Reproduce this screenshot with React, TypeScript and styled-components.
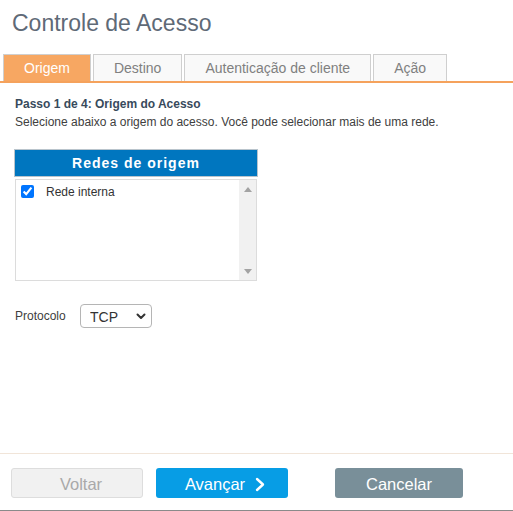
import React from "react";
import styled, { createGlobalStyle } from "styled-components";

const Global = createGlobalStyle`
  html, body { margin: 0; padding: 0; background: #fff; }
  body { font-family: "Liberation Sans", Arial, sans-serif; }
  * { box-sizing: border-box; }
`;

const Page = styled.div`
  height: 511px;
  display: flex;
  flex-direction: column;
  border-bottom: 1px solid #8a8a8a;
`;

const Main = styled.div`
  flex: 1;
  display: flex;
  flex-direction: column;
`;

const Title = styled.h1`
  margin: 0;
  padding: 10px 0 0 12px;
  font-size: 23px;
  line-height: 26px;
  font-weight: normal;
  color: #5f6a77;
`;

const TabBar = styled.div`
  margin-top: 18px;
  display: flex;
  gap: 2px;
  padding-left: 3px;
  border-bottom: 2px solid #f5a25c;
`;

const Tab = styled.div<{ $active?: boolean }>`
  padding: 1px 20px 0;
  line-height: 25px;
  font-size: 14px;
  border: 1px solid #cfcfcf;
  border-bottom: none;
  height: 27px;
  background: ${(p) => (p.$active ? "#f7a762" : "#f9f9f9")};
  color: ${(p) => (p.$active ? "#ffffff" : "#808080")};
`;

const Content = styled.div`
  padding: 12px 15px 0 15px;
  display: flex;
  flex-direction: column;
`;

const StepTitle = styled.div`
  font-size: 12px;
  line-height: 18px;
  font-weight: bold;
  color: #384a5c;
`;

const StepText = styled.div`
  font-size: 12px;
  line-height: 18px;
  color: #404040;
`;

const Panel = styled.div`
  margin-top: 18px;
  margin-left: -1px;
  width: 244px;
  display: flex;
  flex-direction: column;
  gap: 2px;
`;

const PanelHeader = styled.div`
  height: 28px;
  background: #0076bf;
  border: 1px solid #b9c4cc;
  color: #fff;
  font-weight: bold;
  font-size: 14px;
  letter-spacing: 1px;
  text-align: center;
  line-height: 26px;
`;

const ListBox = styled.div`
  margin: 0 1px;
  height: 102px;
  border: 1px solid #dcdcdc;
  display: flex;
`;

const ListItems = styled.div`
  flex: 1;
  padding: 5px;
`;

const ListRow = styled.label`
  display: flex;
  align-items: center;
  font-size: 12px;
  color: #333;
  height: 13px;
`;

const Check = styled.input`
  margin: 0 12px 0 0;
  width: 13px;
  height: 13px;
  accent-color: #0075ff;
`;

const ScrollTrack = styled.div`
  width: 17px;
  background: #f1f1f1;
  display: flex;
  flex-direction: column;
  justify-content: space-between;
  align-items: center;
  padding: 7px 0 6px;
`;

const ProtoRow = styled.div`
  margin-top: 23px;
  display: flex;
  align-items: center;
`;

const ProtoLabel = styled.span`
  font-size: 12px;
  color: #404040;
  width: 65px;
`;

const SelectWrap = styled.div`
  position: relative;
  width: 72px;
  height: 24px;
`;

const Select = styled.select`
  appearance: none;
  width: 100%;
  height: 100%;
  border: 1px solid #b5b5b5;
  border-radius: 4px;
  background: #fff;
  font-family: "Liberation Sans", Arial, sans-serif;
  font-size: 14px;
  color: #333;
  padding: 1px 0 0 9px;
`;

const SelectArrow = styled.span`
  position: absolute;
  right: 6px;
  top: 9px;
  pointer-events: none;
  display: flex;
`;

const Footer = styled.div`
  border-top: 1px solid #f1e5d9;
  padding: 14px 11px 12px;
  display: flex;
  gap: 13px;
`;

const Button = styled.button<{ $variant: "disabled" | "primary" | "secondary"; $width: number }>`
  width: ${(p) => p.$width}px;
  height: 30px;
  border-radius: 3px;
  font-family: "Liberation Sans", Arial, sans-serif;
  font-size: 16.5px;
  display: flex;
  align-items: center;
  justify-content: center;
  gap: 10px;
  padding: 2px 0 0 ${(p) => (p.$variant === "disabled" ? "8px" : "0")};
  border: 1px solid
    ${(p) => (p.$variant === "disabled" ? "#dddddd" : "transparent")};
  background: ${(p) =>
    p.$variant === "disabled" ? "#f1f1f1" : p.$variant === "primary" ? "#079de5" : "#798f99"};
  color: ${(p) => (p.$variant === "disabled" ? "#a9a9a9" : "#ffffff")};
`;

const PrimaryLabel = styled.span`
  margin-left: 6px;
`;

const CancelSlot = styled.div`
  margin-left: 34px;
  display: flex;
`;

const Triangle = ({ down }: { down?: boolean }) => (
  <svg width="8" height="5" viewBox="0 0 8 5">
    <polygon points={down ? "0,0 8,0 4,5" : "0,5 8,5 4,0"} fill="#a3a3a3" />
  </svg>
);

export default function App() {
  return (
    <Page>
      <Global />
      <Main>
        <Title>Controle de Acesso</Title>
        <TabBar>
          <Tab $active>Origem</Tab>
          <Tab>Destino</Tab>
          <Tab>Autenticação de cliente</Tab>
          <Tab>Ação</Tab>
        </TabBar>
        <Content>
          <StepTitle>Passo 1 de 4: Origem do Acesso</StepTitle>
          <StepText>
            Selecione abaixo a origem do acesso. Você pode selecionar mais de uma rede.
          </StepText>
          <Panel>
            <PanelHeader>Redes de origem</PanelHeader>
            <ListBox>
              <ListItems>
                <ListRow>
                  <Check type="checkbox" defaultChecked />
                  Rede interna
                </ListRow>
              </ListItems>
              <ScrollTrack>
                <Triangle />
                <Triangle down />
              </ScrollTrack>
            </ListBox>
          </Panel>
          <ProtoRow>
            <ProtoLabel>Protocolo</ProtoLabel>
            <SelectWrap>
              <Select defaultValue="TCP">
                <option>TCP</option>
                <option>UDP</option>
              </Select>
              <SelectArrow>
                <svg width="10" height="7" viewBox="0 0 10 7">
                  <polyline
                    points="1.5,1.5 5,5 8.5,1.5"
                    fill="none"
                    stroke="#333"
                    strokeWidth="2"
                    strokeLinecap="round"
                    strokeLinejoin="round"
                  />
                </svg>
              </SelectArrow>
            </SelectWrap>
          </ProtoRow>
        </Content>
      </Main>
      <Footer>
        <Button $variant="disabled" $width={132}>Voltar</Button>
        <Button $variant="primary" $width={132}>
          <PrimaryLabel>Avançar</PrimaryLabel>
          <svg width="10" height="15" viewBox="0 0 10 15">
            <polyline
              points="2,2 8,7.5 2,13"
              fill="none"
              stroke="#fff"
              strokeWidth="2.4"
              strokeLinecap="round"
              strokeLinejoin="round"
            />
          </svg>
        </Button>
        <CancelSlot>
          <Button $variant="secondary" $width={128}>Cancelar</Button>
        </CancelSlot>
      </Footer>
    </Page>
  );
}
